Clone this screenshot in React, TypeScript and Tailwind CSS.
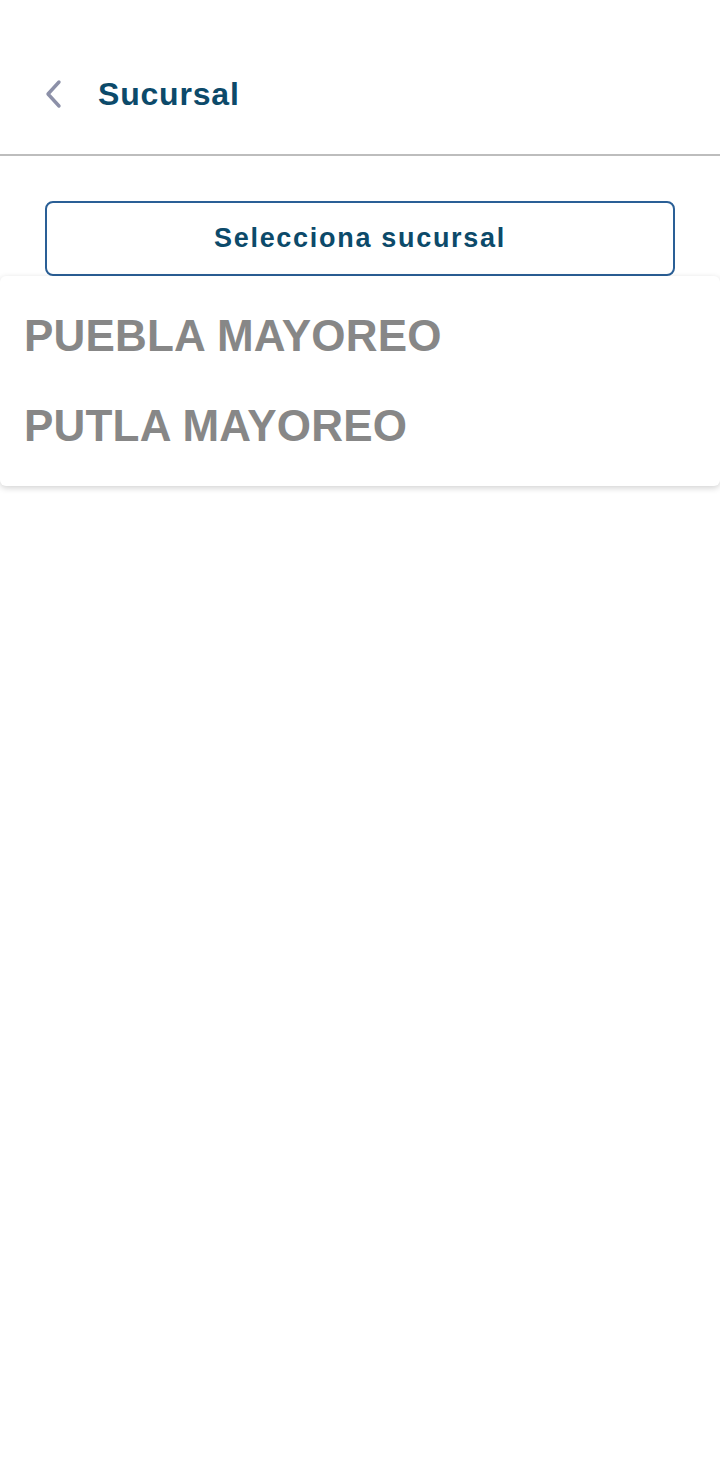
import type { FC } from 'react'

const branches = ['PUEBLA MAYOREO', 'PUTLA MAYOREO']

const App: FC = () => {
  return (
    <div className="min-h-screen bg-white" style={{ fontFamily: '"Liberation Sans", Arial, sans-serif' }}>
      {/* Header */}
      <div className="h-[156px] border-b-2 border-[#bdbdbd] pt-[60px]">
        <div className="flex items-center h-[68px] pl-[42px]">
          <svg width="24" height="32" viewBox="0 0 24 32" fill="none" className="shrink-0">
            <path d="M17 4 L6 16 L17 28" stroke="#8c90a8" strokeWidth="3.4" strokeLinecap="round" strokeLinejoin="round" />
          </svg>
          <h1 className="ml-[32px] text-[32px] font-bold text-[#0c4a6a] tracking-[0.8px]">Sucursal</h1>
        </div>
      </div>

      {/* Select */}
      <div className="px-[45px] pt-[45px]">
        <button className="w-full h-[75px] border-2 border-[#2a5f96] rounded-[8px] flex items-center justify-center text-[27px] font-bold text-[#0c4a6a] tracking-[1.7px]">
          Selecciona sucursal
        </button>
      </div>

      {/* Dropdown */}
      <div className="bg-white rounded-[6px] shadow-[0_2px_6px_rgba(0,0,0,0.18)] py-[15px]">
        {branches.map((b) => (
          <div key={b} className="h-[90px] flex items-center px-[24px] text-[44px] font-bold text-[#878787] tracking-[0.2px]">
            {b}
          </div>
        ))}
      </div>
    </div>
  )
}

export default App
